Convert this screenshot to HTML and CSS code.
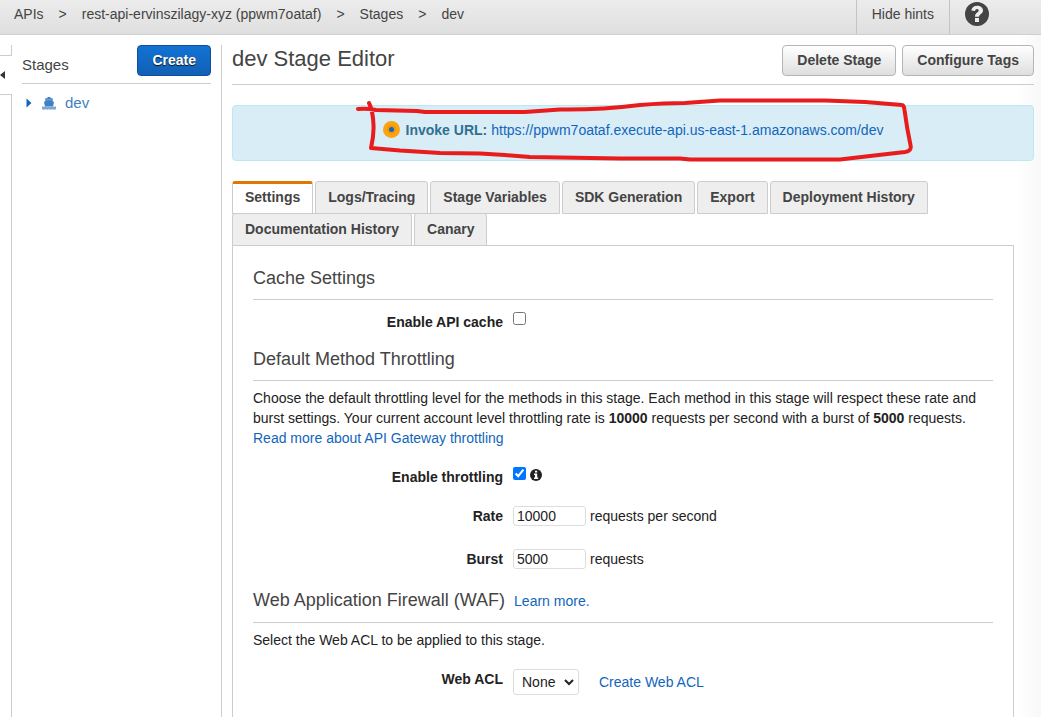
FILE: index.html
```html
<!DOCTYPE html>
<html lang="en">
<head>
<meta charset="utf-8">
<meta name="viewport" content="width=device-width, initial-scale=1">
<title>dev Stage Editor</title>
<link rel="stylesheet" href="styles.css">
</head>
<body class="page">
<header class="topbar">
  <nav class="crumbs" aria-label="Breadcrumb">
    <a class="crumb" href="#">APIs</a><span>&gt;</span>
    <a class="crumb" href="#">rest-api-ervinszilagy-xyz (ppwm7oataf)</a><span>&gt;</span>
    <a class="crumb" href="#">Stages</a><span>&gt;</span>
    <a class="crumb" href="#">dev</a>
  </nav>
  <button class="hints" type="button">Hide hints</button>
  <button class="help" type="button" aria-label="Help">
    <svg width="24" height="24" viewBox="0 0 24 24"><circle cx="12" cy="12" r="12" fill="#444"/><path d="M6.300 8.600C6.800 5.400 9 3.700 12.100 3.700C15.400 3.700 18 5.500 18 8.400C18 12 14 12 14 14.700H10C10 10.700 13.700 10.700 13.700 8.600C13.700 7.500 12.900 7 12 7C10.900 7 10.200 7.700 10 9.100Z" fill="#eee"/><rect x="10" y="16" width="4" height="4" fill="#eee"/></svg>
  </button>
</header>
<div class="body">
  <div class="rail">
    <div class="rail-top"></div>
    <button class="rail-toggle" type="button" aria-label="Collapse"><svg width="5" height="8" viewBox="0 0 5 8"><path d="M5 0V8L0 4Z" fill="#333"/></svg></button>
    <div class="rail-rest"></div>
  </div>
  <aside class="sidebar">
    <div class="side-head"><h2 class="side-title">Stages</h2><button class="btn btn-primary" type="button">Create</button></div>
    <a class="stage" href="#">
      <svg class="caret" width="6" height="10" viewBox="0 0 6 10"><path d="M0.500 0.500V9.500L5.500 5Z" fill="#1166bb"/></svg>
      <svg class="ship" width="14" height="13" viewBox="0 0 14 13"><path d="M5.500 0H8.500V1.200H10.700V4.200L12 5L11 9.500H3L2 5L3.300 4.200V1.200H5.500Z" fill="#3f7fc4"/><path d="M4.500 2.600H9.500V3.600L7 3L4.500 3.600Z" fill="#9fc0e2"/><path d="M0 9.300L1.400 9.800L3.300 9.200L5.200 9.800L7 9.200L8.800 9.800L10.700 9.200L12.600 9.800L14 9.300V12.300L12.600 12.800L10.700 12.300L8.800 12.800L7 12.300L5.200 12.800L3.300 12.300L1.400 12.800L0 12.300Z" fill="#7fa6d4"/></svg>
      <span>dev</span>
    </a>
  </aside>
  <main class="main">
    <div class="main-head">
      <h1 class="title">dev Stage Editor</h1>
      <button class="btn" type="button">Delete Stage</button>
      <button class="btn" type="button">Configure Tags</button>
    </div>
    <div class="alert">
      <div class="invoke">
        <svg class="dot" width="17" height="17" viewBox="0 0 17 17"><circle cx="8.500" cy="8.500" r="8.500" fill="#fca311"/><circle cx="8.500" cy="8.500" r="4.500" fill="#f0980c"/><circle cx="8.500" cy="8.500" r="2.500" fill="#1166bb"/></svg>
        <b>Invoke URL:</b>
        <a class="link" href="#">https://ppwm7oataf.execute-api.us-east-1.amazonaws.com/dev</a>
        <svg class="marker" width="560" height="66" viewBox="355 98 560 66"><path d="M358 109Q366 108 376 110L417 111L425 112H525L560 109.500Q600 110 640 105Q665 103 685 103L720 100.500H825L865 102Q890 104 902 105Q904 105 904.500 110Q907 129 910.500 145Q912 151 905 152L870 156L840 159.500H690L680 158.500H620L530 157L505 155L480 153.500L440 153L400 150.500L371 148Q374 135 373.500 125Q373 111 369 103" fill="none" stroke="#e81c1c" stroke-width="4" stroke-linecap="round" stroke-linejoin="round"/></svg>
      </div>
    </div>
    <div class="tabs" role="tablist">
      <button class="tab tab-on" type="button" role="tab" aria-selected="true">Settings</button>
      <button class="tab" type="button" role="tab">Logs/Tracing</button>
      <button class="tab" type="button" role="tab">Stage Variables</button>
      <button class="tab" type="button" role="tab">SDK Generation</button>
      <button class="tab" type="button" role="tab">Export</button>
      <button class="tab" type="button" role="tab">Deployment History</button>
      <button class="tab" type="button" role="tab">Documentation History</button>
      <button class="tab" type="button" role="tab">Canary</button>
    </div>
    <form class="panel">
      <h3 class="section">Cache Settings</h3>
      <div class="row row-first"><label class="label" for="cache">Enable API cache</label><div class="field field-top"><input class="check" id="cache" type="checkbox"></div></div>
      <h3 class="section section-next">Default Method Throttling</h3>
      <p class="text">Choose the default throttling level for the methods in this stage. Each method in this stage will respect these rate and burst settings. Your current account level throttling rate is <b>10000</b> requests per second with a burst of <b>5000</b> requests. <a class="link" href="#">Read more about API Gateway throttling</a></p>
      <div class="row"><label class="label" for="throttle">Enable throttling</label><div class="field field-top"><input class="check" id="throttle" type="checkbox" checked>
        <svg class="info" width="12" height="12" viewBox="0 0 12 12"><circle cx="6" cy="6" r="6" fill="#222"/><path d="M5 1.800H7.200V3.600H5ZM4 4.600H7.200V8.600H8.200V10H4V8.600H5V6H4Z" fill="#fff"/></svg></div></div>
      <div class="row"><label class="label" for="rate">Rate</label><div class="field"><input class="input" id="rate" type="text" value="10000"><span>requests per second</span></div></div>
      <div class="row row-loose"><label class="label" for="burst">Burst</label><div class="field"><input class="input" id="burst" type="text" value="5000"><span>requests</span></div></div>
      <h3 class="section section-waf">Web Application Firewall (WAF) <a class="link learn" href="#">Learn more.</a></h3>
      <p class="text">Select the Web ACL to be applied to this stage.</p>
      <div class="row"><label class="label" for="acl">Web ACL</label><div class="field"><span class="pick"><select class="select" id="acl"><option>None</option></select><svg class="chevron" width="10" height="7" viewBox="0 0 10 7"><path d="M1 1L5 5L9 1" fill="none" stroke="#222" stroke-width="2"/></svg></span><a class="link acl-link" href="#">Create Web ACL</a></div></div>
    </form>
  </main>
</div>
</body>
</html>
```

FILE: styles.css
```css
* { box-sizing: border-box; }
.page {
  margin: 0;
  min-height: 100vh;
  display: flex;
  flex-direction: column;
  font: 14px/20px "Liberation Sans", Arial, sans-serif;
  color: #222;
  background: #fff;
}
button, input, select { font: inherit; color: inherit; margin: 0; }
button { cursor: pointer; }
a { text-decoration: none; }
.link { color: #1166bb; }

.topbar {
  display: flex;
  height: 35px;
  color: #444;
  background: linear-gradient(#ececec, #dfdfdf);
  border-bottom: 1px solid #d0d0d0;
}
.crumbs { flex: 1; display: flex; gap: 15px; padding: 4px 14px; white-space: nowrap; }
.crumb { color: #444; }
.hints {
  padding: 0 15px 6px;
  background: none;
  border: solid #c4c4c4;
  border-width: 0 1px;
}
.help { display: flex; padding: 2px 52px 0 15px; border: 0; background: none; }

.body {
  flex: 1;
  display: flex;
  padding: 10px 7px 0 0;
  background: linear-gradient(to left, #f8f8f8, #fff 24px);
}
.rail { width: 12px; display: flex; flex-direction: column; }
.rail-top { height: 11px; border: solid #ccc; border-width: 0 1px 1px 0; }
.rail-toggle { display: flex; align-items: center; height: 38px; padding: 0; border: 0; background: none; }
.rail-rest { flex: 1; border: solid #ccc; border-width: 1px 1px 0 0; }

.sidebar { width: 210px; padding: 0 10px; border-right: 1px solid #ccc; }
.side-head {
  display: flex;
  justify-content: space-between;
  height: 39px;
  border-bottom: 1px solid #ccc;
}
.side-title { margin: 0; padding-top: 10px; font-size: 15px; font-weight: normal; color: #444; }
.btn {
  height: 31px;
  padding: 0 14px 2px;
  font-weight: bold;
  color: #444;
  background: linear-gradient(#fff, #dedede);
  border: 1px solid #b5b5b5;
  border-radius: 4px;
}
.btn-primary {
  color: #fff;
  background: linear-gradient(#1272d3, #1160b4);
  border-color: #0d4f99;
  text-shadow: 0 1px 1px #111;
}
.stage { display: flex; align-items: center; padding: 9px 4px; font-size: 15px; color: #3f7fc4; }
.ship { margin: 0 9px 0 10px; }

.main { flex: 1; min-width: 0; padding-left: 10px; display: flex; flex-direction: column; }
.main-head { display: flex; gap: 6px; height: 40px; border-bottom: 1px solid #ccc; }
.title { flex: 1; margin: 0; font-size: 22px; line-height: 28px; font-weight: normal; color: #444; }
.alert {
  display: flex;
  justify-content: center;
  margin: 20px 0;
  padding: 14px 0 20px;
  color: #31708f;
  background: #d9edf7;
  border: 1px solid #bce8f1;
  border-radius: 4px;
}
.invoke { position: relative; display: flex; align-items: center; gap: 4px; }
.dot { margin: 0 2px 1px 0; }
.marker { position: absolute; left: -28px; top: -22px; pointer-events: none; }

.tabs { display: flex; flex-wrap: wrap; column-gap: 2px; margin-right: 20px; }
.tab {
  height: 33px;
  margin-bottom: -1px;
  padding: 0 12px 2px;
  font-weight: bold;
  color: #444;
  background: #eee;
  border: 1px solid #ccc;
  border-radius: 3px 3px 0 0;
}
.tab-on { background: #fff; border-top: 3px solid #e07700; padding-bottom: 4px; }
.panel { flex: 1; margin-right: 20px; padding: 20px 20px 16px; border: 1px solid #ccc; border-bottom: 0; background: #fff; }
.section {
  margin: 0;
  padding-bottom: 9px;
  font-size: 18px;
  line-height: 24px;
  font-weight: normal;
  color: #444;
  border-bottom: 1px solid #ccc;
}
.section-next { margin-top: 15px; }
.section-waf { margin-top: 19px; }
.learn { margin-left: 4px; font-size: 14px; }
.text { margin: 7px 0 0; }
.row { display: grid; grid-template-columns: 250px 1fr; column-gap: 10px; margin-top: 19px; }
.row-first { margin-top: 12px; }
.row-loose { margin-top: 23px; }
.label { font-weight: bold; text-align: right; }
.field { display: flex; align-items: center; gap: 4px; }
.field-top { align-items: flex-start; }
.check { width: 13px; height: 13px; }
.info { margin-top: 2px; }
.input { width: 73px; height: 20px; padding: 0 3px; border: 1px solid #ddd; border-radius: 3px; background: #fff; }
.pick { position: relative; display: flex; }
.select {
  appearance: none;
  width: 66px;
  height: 26px;
  padding: 0 8px;
  border: 1px solid #ddd;
  border-radius: 3px;
  background: #fff;
}
.chevron { position: absolute; right: 5px; top: 10px; pointer-events: none; }
.acl-link { margin-left: 16px; }
```
